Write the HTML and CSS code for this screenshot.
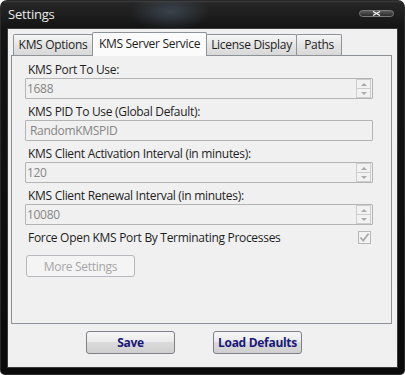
FILE: index.html
```html
<!doctype html>
<html lang="en">
  <head>
    <meta charset="UTF-8" />
    <title>Settings</title>
    <link rel="stylesheet" href="styles.css">
  </head>
  <body>
    <div class="window">
      <div class="titlebar">
        <span class="title">Settings</span>
        <span class="close">
          <svg width="9" height="5" viewBox="0 0 9 5"><path d="M1 0.5 L8 4.5 M8 0.5 L1 4.5" stroke="#f4f4f4" stroke-width="1.3" fill="none"/></svg>
        </span>
      </div>
      <div class="client">
        <div class="tabs">
          <div class="tab tab-options">KMS Options</div>
          <div class="tab tab-server active">KMS Server Service</div>
          <div class="tab tab-license">License Display</div>
          <div class="tab tab-paths">Paths</div>
        </div>
        <div class="panel">
          <div class="field">
            <label>KMS Port To Use:</label>
            <div class="input spin">
              <span class="value">1688</span>
              <span class="arrows"><span class="up"></span><span class="down"></span></span>
            </div>
          </div>
          <div class="field">
            <label>KMS PID To Use (Global Default):</label>
            <div class="input">
              <span class="value pid">RandomKMSPID</span>
            </div>
          </div>
          <div class="field">
            <label>KMS Client Activation Interval (in minutes):</label>
            <div class="input spin">
              <span class="value">120</span>
              <span class="arrows"><span class="up"></span><span class="down"></span></span>
            </div>
          </div>
          <div class="field">
            <label>KMS Client Renewal Interval (in minutes):</label>
            <div class="input spin">
              <span class="value">10080</span>
              <span class="arrows"><span class="up"></span><span class="down"></span></span>
            </div>
          </div>
          <div class="check-row">
            <span>Force Open KMS Port By Terminating Processes</span>
            <span class="checkbox">
              <svg width="11" height="11" viewBox="0 0 11 11"><path d="M1.5 5.5 L4.2 8.5 L9.5 1.8" stroke="#a8a8a8" stroke-width="1.8" fill="none"/></svg>
            </span>
          </div>
          <button class="btn-disabled">More Settings</button>
        </div>
        <div class="actions">
          <button class="btn">Save</button>
          <button class="btn">Load Defaults</button>
        </div>
      </div>
    </div>
  </body>
</html>
```

FILE: styles.css
```css
body {
  margin: 0;
  padding: 0;
  background-color: #ffffff;
  font-family: "Open Sans", sans-serif;
  font-size: 12px;
  letter-spacing: -0.3px;
  color: #1e1e1e;
}

.window {
  width: 405px;
  height: 375px;
  box-sizing: border-box;
  padding: 0 8px 8px 8px;
  border-radius: 7px 7px 5px 5px;
  display: flex;
  flex-direction: column;
  background:
    radial-gradient(ellipse 40px 18px at 170px 12px, rgba(90, 110, 130, 0.45), transparent),
    linear-gradient(#4a4a4a 0, #262626 3px, #141414 28px, #0a0a0a 100%);
  box-shadow: inset 0 0 0 1px #2a2a2a;
}

.titlebar {
  height: 28px;
  display: flex;
  align-items: flex-start;
  justify-content: space-between;
}

.title {
  color: #e8e8e8;
  font-size: 13px;
  letter-spacing: -0.2px;
  margin-top: 5px;
}

.close {
  width: 33px;
  height: 5px;
  margin: 10px 3px 0 0;
  border: 1px solid #7a7a7a;
  border-radius: 4px;
  background: linear-gradient(#5a5a5a, #2c2c2c);
  display: flex;
  align-items: center;
  justify-content: center;
}

.close svg {
  display: block;
}

.client {
  flex: 1;
  background-color: #f0f0f0;
  border: 1px solid #3a3a3a;
  margin: 0 -1px -1px -1px;
  display: flex;
  flex-direction: column;
}

.tabs {
  display: flex;
  align-items: flex-end;
  height: 26px;
  padding-left: 5px;
  position: relative;
  z-index: 1;
}

.tab {
  height: 21px;
  box-sizing: border-box;
  padding: 1px 0 0 0;
  text-align: center;
  border: 1px solid #8e9299;
  border-bottom: none;
  border-radius: 2px 2px 0 0;
  background: linear-gradient(#f6f6f6, #e4e4e4 50%, #d8d8d8);
  margin-right: -1px;
}

.tab-options { width: 80px; }
.tab-server { width: 115px; }
.tab-license { width: 91px; }
.tab-paths { width: 46px; }

.tab.active {
  height: 24px;
  padding-top: 2px;
  background: #fbfbfb;
  margin-bottom: -1px;
  position: relative;
  z-index: 2;
}

.panel {
  height: 269px;
  box-sizing: border-box;
  margin: 0 5px 0 3px;
  border: 1px solid #8e9299;
  background-color: #f0f0f0;
  padding: 5px 18px 0 13px;
}

.field label {
  display: block;
  height: 17px;
  line-height: 17px;
  padding-left: 3px;
}

.input {
  height: 21px;
  box-sizing: border-box;
  border: 1px solid #b4b4b4;
  border-radius: 1px;
  background-color: #f0f0f0;
  display: flex;
  align-items: center;
  justify-content: space-between;
  margin-bottom: 4px;
}

.value {
  color: #868686;
  padding-left: 1px;
  line-height: 17px;
}

.value.pid {
  padding-left: 4px;
}

.arrows {
  display: flex;
  flex-direction: column;
  margin-right: 1px;
}

.arrows span {
  width: 13px;
  height: 8px;
  border: 1px solid #cdcdcd;
  background-color: #f2f2f2;
  display: flex;
  align-items: center;
  justify-content: center;
}

.arrows span + span {
  border-top: none;
}

.arrows .up::after,
.arrows .down::after {
  content: "";
  border-left: 3px solid transparent;
  border-right: 3px solid transparent;
}

.arrows .up::after {
  border-bottom: 3px solid #a9a9a9;
}

.arrows .down::after {
  border-top: 3px solid #a9a9a9;
}

.check-row {
  display: flex;
  justify-content: space-between;
  align-items: center;
  height: 17px;
  margin-top: 1px;
  padding-left: 3px;
}

.checkbox {
  width: 11px;
  height: 11px;
  border: 1px solid #b7b7b7;
  background-color: #f3f3f3;
  margin-right: 2px;
  display: flex;
  align-items: center;
  justify-content: center;
}

.btn-disabled {
  margin-top: 9px;
  margin-left: 1px;
  width: 109px;
  height: 22px;
  border: 1px solid #b5b9bd;
  border-radius: 3px;
  background: #f4f4f4;
  color: #a6a6a6;
  font-family: "Open Sans", sans-serif;
  font-size: 12px;
  letter-spacing: -0.3px;
  padding: 0;
}

.actions {
  display: flex;
  gap: 38px;
  padding: 7px 0 0 78px;
}

.btn {
  width: 89px;
  height: 23px;
  border: 1px solid #7d8086;
  border-radius: 3px;
  background: linear-gradient(#f6f6f6, #ebebeb 45%, #dbdbdb 50%, #cfcfcf);
  color: #19197a;
  font-family: "Open Sans", sans-serif;
  font-weight: bold;
  font-size: 12px;
  letter-spacing: -0.3px;
  padding: 0;
}
```
